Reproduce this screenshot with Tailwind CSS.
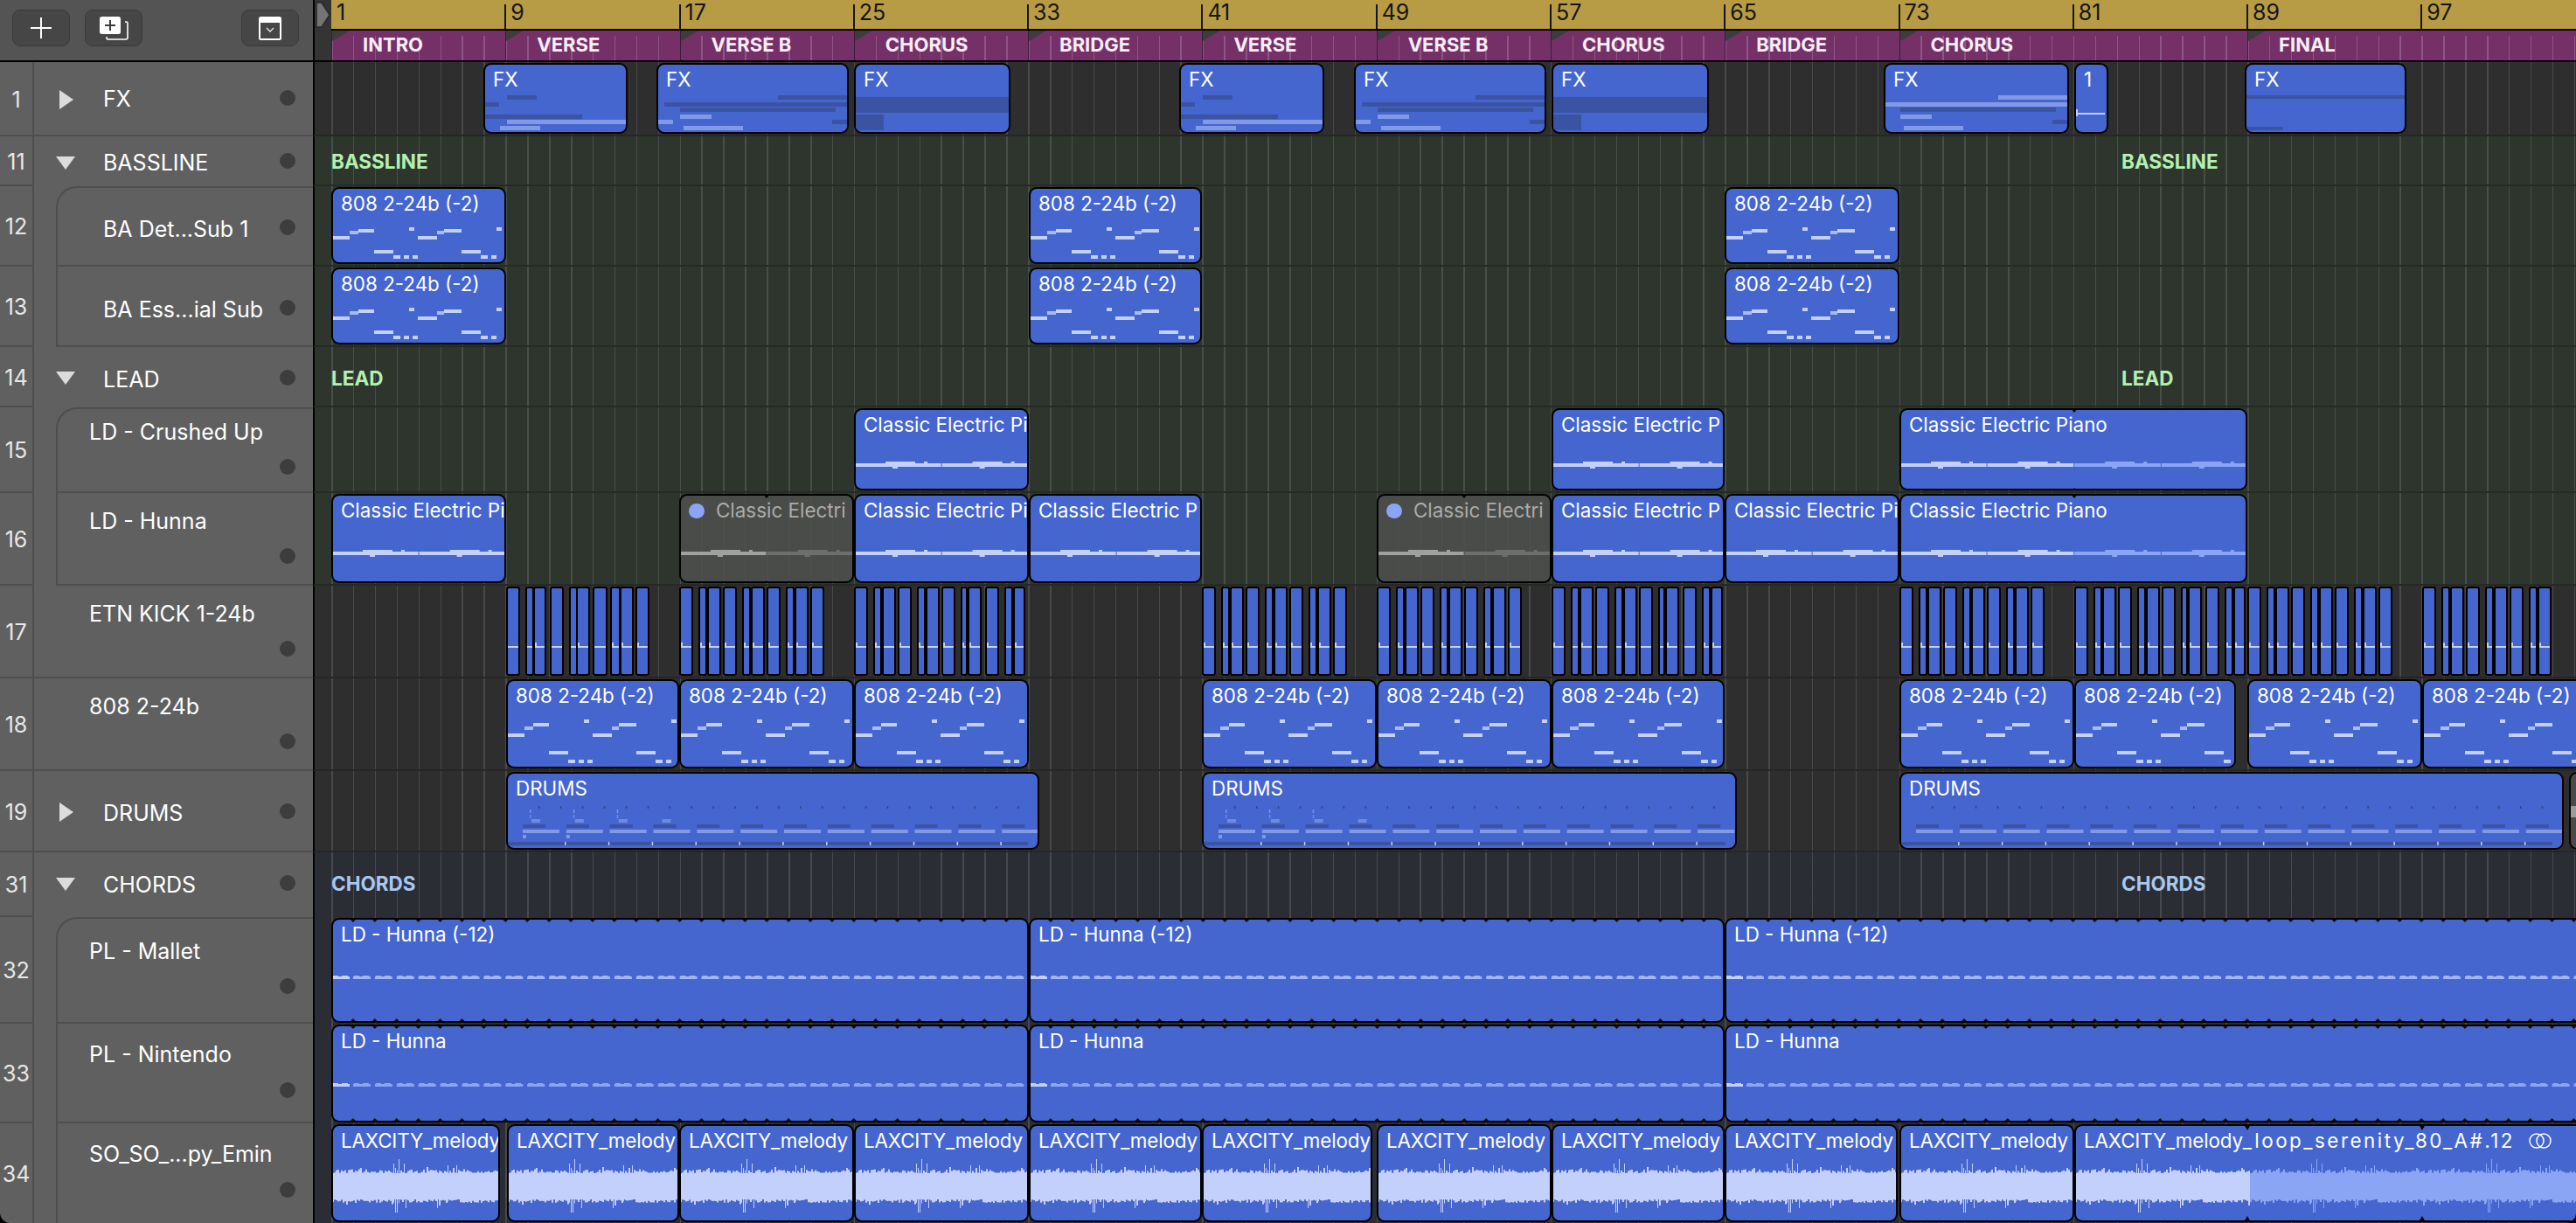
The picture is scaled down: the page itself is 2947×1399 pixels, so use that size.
<!DOCTYPE html>
<html lang="en">
<head>
<meta charset="utf-8">
<title>Arrangement</title>
<script src="https://cdn.jsdelivr.net/npm/@tailwindcss/browser@4"></script>
</head>
<body class="bg-black">
<div class="flex h-[1399px] w-[2947px] flex-col overflow-hidden rounded-b-[12px] bg-black font-['Inter','Liberation_Sans',sans-serif] text-white antialiased">

  <!-- Header -->
  <div class="flex h-[71px] shrink-0 border-b-2 border-black">
    <div class="flex w-[358px] shrink-0 items-start gap-[17px] bg-[#545454] pl-[14px] pr-[16px] pt-[11px]">
      <button class="flex h-[42px] w-[66px] items-center justify-center rounded-[9px] border border-[#3a3a3a] bg-[#464646]">
        <svg width="26" height="26" viewBox="0 0 26 26"><path d="M13 1v24M1 13h24" stroke="#fff" stroke-width="2"/></svg>
      </button>
      <button class="flex h-[42px] w-[66px] items-center justify-center rounded-[9px] border border-[#3a3a3a] bg-[#464646]">
        <svg width="34" height="28" viewBox="0 0 34 28"><path d="M30 7h1.5a1.5 1.5 0 0 1 1.5 1.5V25a2 2 0 0 1-2 2H10.5A1.5 1.5 0 0 1 9 25.500V24" fill="none" stroke="#fff" stroke-width="1.600"/><rect x="1" y="1" width="24" height="20" rx="2.500" fill="#fff"/><path d="M13 5v12M7 11h12" stroke="#3c3c3c" stroke-width="2"/></svg>
      </button>
      <button class="ml-auto flex h-[42px] w-[66px] items-center justify-center rounded-[9px] border border-[#3a3a3a] bg-[#464646]">
        <svg width="26" height="27" viewBox="0 0 26 27"><rect x="1" y="1" width="24" height="25" rx="1.500" fill="none" stroke="#fff" stroke-width="2"/><rect x="1" y="1" width="24" height="6" fill="#fff"/><path d="M9 13l4 4 4-4" fill="none" stroke="#e8e8e8" stroke-width="1.300"/></svg>
      </button>
    </div>
    <div class="relative flex-1 border-l-2 border-black bg-[#343434]">
      <svg class="absolute left-[1px] top-[2px]" width="18" height="30" viewBox="0 0 18 30"><path d="M1 1h6l9 14-9 14H1z" fill="#747474" stroke="#2a2a2a" stroke-width="1.500"/></svg>
      <div class="absolute bottom-0 left-[19px] top-[35px] border-l border-dotted border-[#a8a8a8]"></div>
      <div id="ruler" class="absolute left-[19px] right-0 top-0 h-[33px] bg-[#b89c45]"></div>
      <div class="absolute left-[19px] right-0 top-[33px] h-[2px] bg-black"></div>
      <div id="markers" class="absolute bottom-0 left-[19px] right-0 top-[35px] overflow-hidden bg-[#763068]">
        <div class="absolute inset-x-0 bottom-0 top-[6px] bg-[image:repeating-linear-gradient(90deg,#8f5584_0,#8f5584_1.5px,transparent_1.5px,transparent_24.91px)]"></div>
      </div>
    </div>
  </div>

  <!-- Track 1 -->
  <div class="flex h-[85px] shrink-0">
    <div class="flex w-[358px] shrink-0 bg-[#606060]">
      <div class="flex w-[39px] items-center justify-center border-b-2 border-r-2 border-[#4e4e4e] pt-[4px] text-[25px] text-[#e8e8e8]">1</div>
      <div class="flex flex-1 items-start border-b-2 border-[#4e4e4e] pl-[29px] pr-[20px]">
        <svg class="mt-[32px] w-[16px] shrink-0" height="22" viewBox="0 0 16 22"><path d="M0 0l16 11L0 22z" fill="#dcdcdc"/></svg>
        <span class="ml-[34px] mt-[28px] flex-1 text-[25px] leading-[28px]">FX</span>
        <span class="mt-[32px] size-[18px] rounded-full bg-[#3d3d3d]"></span>
      </div>
    </div>
    <div data-lane class="relative flex-1 overflow-hidden border-b-2 border-l-2 border-b-[#262626] border-l-black bg-[#2e2e2e]"></div>
  </div>

  <!-- Track 11 -->
  <div class="flex h-[57px] shrink-0">
    <div class="flex w-[358px] shrink-0 bg-[#606060]">
      <div class="flex w-[39px] items-center justify-center border-b-2 border-r-2 border-[#4e4e4e] pt-[4px] text-[25px] text-[#e8e8e8]">11</div>
      <div class="flex flex-1 items-start pl-[25px] pr-[20px]">
        <svg class="mt-[23px] w-[22px] shrink-0" height="15" viewBox="0 0 22 15"><path d="M0 0h22L11 15z" fill="#dcdcdc"/></svg>
        <span class="ml-[32px] mt-[16px] flex-1 text-[25px] leading-[28px]">BASSLINE</span>
        <span class="mt-[19px] size-[18px] rounded-full bg-[#3d3d3d]"></span>
      </div>
    </div>
    <div data-lane class="relative flex-1 overflow-hidden border-b-2 border-l-2 border-b-[#252a25] border-l-black bg-[#2d352d]"></div>
  </div>

  <!-- Track 12 -->
  <div class="flex h-[92px] shrink-0">
    <div class="flex w-[358px] shrink-0 bg-[#606060]">
      <div class="flex w-[39px] items-center justify-center border-b-2 border-r-2 border-[#4e4e4e] pt-[4px] text-[25px] text-[#e8e8e8]">12</div>
      <div class="ml-[25px] flex flex-1 items-start rounded-tl-[24px] border-b-2 border-l-2 border-t-2 border-[#4e4e4e] pl-[52px] pr-[20px]">
        <span class="mt-[33px] flex-1 whitespace-nowrap text-[25px] leading-[28px]">BA Det...Sub 1</span>
        <span class="mt-[36px] size-[18px] rounded-full bg-[#3d3d3d]"></span>
      </div>
    </div>
    <div data-lane class="relative flex-1 overflow-hidden border-b-2 border-l-2 border-b-[#252a25] border-l-black bg-[#2d352d]"></div>
  </div>

  <!-- Track 13 -->
  <div class="flex h-[92px] shrink-0">
    <div class="flex w-[358px] shrink-0 bg-[#606060]">
      <div class="flex w-[39px] items-center justify-center border-b-2 border-r-2 border-[#4e4e4e] pt-[4px] text-[25px] text-[#e8e8e8]">13</div>
      <div class="ml-[25px] flex flex-1 items-start border-b-2 border-l-2 border-[#4e4e4e] pl-[52px] pr-[20px]">
        <span class="mt-[35px] flex-1 whitespace-nowrap text-[25px] leading-[28px]">BA Ess...ial Sub</span>
        <span class="mt-[38px] size-[18px] rounded-full bg-[#3d3d3d]"></span>
      </div>
    </div>
    <div data-lane class="relative flex-1 overflow-hidden border-b-2 border-l-2 border-b-[#252a25] border-l-black bg-[#2d352d]"></div>
  </div>

  <!-- Track 14 -->
  <div class="flex h-[69px] shrink-0">
    <div class="flex w-[358px] shrink-0 bg-[#606060]">
      <div class="flex w-[39px] items-center justify-center border-b-2 border-r-2 border-[#4e4e4e] pt-[4px] text-[25px] text-[#e8e8e8]">14</div>
      <div class="flex flex-1 items-start pl-[25px] pr-[20px]">
        <svg class="mt-[28px] w-[22px] shrink-0" height="15" viewBox="0 0 22 15"><path d="M0 0h22L11 15z" fill="#dcdcdc"/></svg>
        <span class="ml-[32px] mt-[23px] flex-1 text-[25px] leading-[28px]">LEAD</span>
        <span class="mt-[26px] size-[18px] rounded-full bg-[#3d3d3d]"></span>
      </div>
    </div>
    <div data-lane class="relative flex-1 overflow-hidden border-b-2 border-l-2 border-b-[#252a25] border-l-black bg-[#2d352d]"></div>
  </div>

  <!-- Track 15 -->
  <div class="flex h-[98px] shrink-0">
    <div class="flex w-[358px] shrink-0 bg-[#606060]">
      <div class="flex w-[39px] items-center justify-center border-b-2 border-r-2 border-[#4e4e4e] pt-[4px] text-[25px] text-[#e8e8e8]">15</div>
      <div class="ml-[25px] flex flex-1 items-start rounded-tl-[24px] border-b-2 border-l-2 border-t-2 border-[#4e4e4e] pl-[36px] pr-[20px]">
        <span class="mt-[12px] flex-1 whitespace-nowrap text-[25px] leading-[28px]">LD - Crushed Up</span>
        <span class="mt-[57px] size-[18px] rounded-full bg-[#3d3d3d]"></span>
      </div>
    </div>
    <div data-lane class="relative flex-1 overflow-hidden border-b-2 border-l-2 border-b-[#252a25] border-l-black bg-[#2d352d]"></div>
  </div>

  <!-- Track 16 -->
  <div class="flex h-[106px] shrink-0">
    <div class="flex w-[358px] shrink-0 bg-[#606060]">
      <div class="flex w-[39px] items-center justify-center border-b-2 border-r-2 border-[#4e4e4e] pt-[4px] text-[25px] text-[#e8e8e8]">16</div>
      <div class="ml-[25px] flex flex-1 items-start border-b-2 border-l-2 border-[#4e4e4e] pl-[36px] pr-[20px]">
        <span class="mt-[18px] flex-1 whitespace-nowrap text-[25px] leading-[28px]">LD - Hunna</span>
        <span class="mt-[63px] size-[18px] rounded-full bg-[#3d3d3d]"></span>
      </div>
    </div>
    <div data-lane class="relative flex-1 overflow-hidden border-b-2 border-l-2 border-b-[#252a25] border-l-black bg-[#2d352d]"></div>
  </div>

  <!-- Track 17 -->
  <div class="flex h-[106px] shrink-0">
    <div class="flex w-[358px] shrink-0 bg-[#606060]">
      <div class="flex w-[39px] items-center justify-center border-b-2 border-r-2 border-[#4e4e4e] pt-[4px] text-[25px] text-[#e8e8e8]">17</div>
      <div class="flex flex-1 items-start border-b-2 border-[#4e4e4e] pl-[63px] pr-[20px]">
        <span class="mt-[18px] flex-1 whitespace-nowrap text-[25px] leading-[28px]">ETN KICK 1-24b</span>
        <span class="mt-[63px] size-[18px] rounded-full bg-[#3d3d3d]"></span>
      </div>
    </div>
    <div data-lane class="relative flex-1 overflow-hidden border-b-2 border-l-2 border-b-[#262626] border-l-black bg-[#2e2e2e]"></div>
  </div>

  <!-- Track 18 -->
  <div class="flex h-[106px] shrink-0">
    <div class="flex w-[358px] shrink-0 bg-[#606060]">
      <div class="flex w-[39px] items-center justify-center border-b-2 border-r-2 border-[#4e4e4e] pt-[4px] text-[25px] text-[#e8e8e8]">18</div>
      <div class="flex flex-1 items-start border-b-2 border-[#4e4e4e] pl-[63px] pr-[20px]">
        <span class="mt-[18px] flex-1 whitespace-nowrap text-[25px] leading-[28px]">808 2-24b</span>
        <span class="mt-[63px] size-[18px] rounded-full bg-[#3d3d3d]"></span>
      </div>
    </div>
    <div data-lane class="relative flex-1 overflow-hidden border-b-2 border-l-2 border-b-[#262626] border-l-black bg-[#2e2e2e]"></div>
  </div>

  <!-- Track 19 -->
  <div class="flex h-[93px] shrink-0">
    <div class="flex w-[358px] shrink-0 bg-[#606060]">
      <div class="flex w-[39px] items-center justify-center border-b-2 border-r-2 border-[#4e4e4e] pt-[4px] text-[25px] text-[#e8e8e8]">19</div>
      <div class="flex flex-1 items-start border-b-2 border-[#4e4e4e] pl-[29px] pr-[20px]">
        <svg class="mt-[36px] w-[16px] shrink-0" height="22" viewBox="0 0 16 22"><path d="M0 0l16 11L0 22z" fill="#dcdcdc"/></svg>
        <span class="ml-[34px] mt-[34px] flex-1 text-[25px] leading-[28px]">DRUMS</span>
        <span class="mt-[37px] size-[18px] rounded-full bg-[#3d3d3d]"></span>
      </div>
    </div>
    <div data-lane class="relative flex-1 overflow-hidden border-b-2 border-l-2 border-b-[#262626] border-l-black bg-[#2e2e2e]"></div>
  </div>

  <!-- Track 31 -->
  <div class="flex h-[74px] shrink-0">
    <div class="flex w-[358px] shrink-0 bg-[#606060]">
      <div class="flex w-[39px] items-center justify-center border-b-2 border-r-2 border-[#4e4e4e] pt-[4px] text-[25px] text-[#e8e8e8]">31</div>
      <div class="flex flex-1 items-start pl-[25px] pr-[20px]">
        <svg class="mt-[29px] w-[22px] shrink-0" height="15" viewBox="0 0 22 15"><path d="M0 0h22L11 15z" fill="#dcdcdc"/></svg>
        <span class="ml-[32px] mt-[23px] flex-1 text-[25px] leading-[28px]">CHORDS</span>
        <span class="mt-[26px] size-[18px] rounded-full bg-[#3d3d3d]"></span>
      </div>
    </div>
    <div data-lane class="relative flex-1 overflow-hidden border-l-2 border-l-black bg-[#2a2e34]"></div>
  </div>

  <!-- Track 32 -->
  <div class="flex h-[122px] shrink-0">
    <div class="flex w-[358px] shrink-0 bg-[#606060]">
      <div class="flex w-[39px] items-center justify-center border-b-2 border-r-2 border-[#4e4e4e] pt-[4px] text-[25px] text-[#e8e8e8]">32</div>
      <div class="ml-[25px] flex flex-1 items-start rounded-tl-[24px] border-b-2 border-l-2 border-t-2 border-[#4e4e4e] pl-[36px] pr-[20px]">
        <span class="mt-[23px] flex-1 whitespace-nowrap text-[25px] leading-[28px]">PL - Mallet</span>
        <span class="mt-[68px] size-[18px] rounded-full bg-[#3d3d3d]"></span>
      </div>
    </div>
    <div data-lane class="relative flex-1 overflow-hidden border-l-2 border-l-black bg-[#2a2e34]"></div>
  </div>

  <!-- Track 33 -->
  <div class="flex h-[114px] shrink-0">
    <div class="flex w-[358px] shrink-0 bg-[#606060]">
      <div class="flex w-[39px] items-center justify-center border-b-2 border-r-2 border-[#4e4e4e] pt-[4px] text-[25px] text-[#e8e8e8]">33</div>
      <div class="ml-[25px] flex flex-1 items-start border-b-2 border-l-2 border-[#4e4e4e] pl-[36px] pr-[20px]">
        <span class="mt-[21px] flex-1 whitespace-nowrap text-[25px] leading-[28px]">PL - Nintendo</span>
        <span class="mt-[67px] size-[18px] rounded-full bg-[#3d3d3d]"></span>
      </div>
    </div>
    <div data-lane class="relative flex-1 overflow-hidden border-l-2 border-l-black bg-[#2a2e34]"></div>
  </div>

  <!-- Track 34 -->
  <div class="flex h-[114px] shrink-0">
    <div class="flex w-[358px] shrink-0 bg-[#606060]">
      <div class="flex w-[39px] items-center justify-center border-r-2 border-[#4e4e4e] pt-[4px] text-[25px] text-[#e8e8e8]">34</div>
      <div class="ml-[25px] flex flex-1 items-start border-l-2 border-[#4e4e4e] pl-[36px] pr-[20px]">
        <span class="mt-[21px] flex-1 whitespace-nowrap text-[25px] leading-[28px]">SO_SO_...py_Emin</span>
        <span class="mt-[67px] size-[18px] rounded-full bg-[#3d3d3d]"></span>
      </div>
    </div>
    <div data-lane class="relative flex-1 overflow-hidden border-l-2 border-l-black bg-[#2a2e34]"></div>
  </div>
</div>

<script>
const LANE_X = 360, BAR = 24.91, ORIGIN = 379;
const tops = [71,156,213,305,397,466,564,670,776,882,975,1049,1171,1285];
const lanes = [...document.querySelectorAll('[data-lane]')];
const LIGHT = '#c3d0fb', MID = '#8299e6', DARK = '#3a53a3', LOOP = '#8ba5f5';
const bar = n => ORIGIN + BAR * (n - 1);

lanes.forEach(l => {
  const g = document.createElement('div');
  g.className = 'absolute inset-y-0 left-[19px] right-0 bg-[image:repeating-linear-gradient(90deg,rgba(255,255,255,0.13)_0,rgba(255,255,255,0.13)_1.5px,transparent_1.5px,transparent_24.91px)]';
  l.appendChild(g);
});

/* Ruler and arrangement markers */
const ruler = document.getElementById('ruler'), markers = document.getElementById('markers');
for (let n = 1; n <= 97; n += 8) {
  const t = document.createElement('div');
  t.className = n === 1
    ? 'absolute top-[5px] bottom-0 flex pl-[7px] text-[25px] leading-[18px] text-[#141414]'
    : 'absolute top-[5px] bottom-0 flex border-l-2 border-[#141414] pl-[5px] text-[25px] leading-[18px] text-[#141414]';
  t.style.left = (bar(n) - ORIGIN - 1) + 'px';
  t.textContent = n;
  ruler.appendChild(t);
}
[[1,'INTRO'],[9,'VERSE'],[17,'VERSE B'],[25,'CHORUS'],[33,'BRIDGE'],[41,'VERSE'],[49,'VERSE B'],[57,'CHORUS'],[65,'BRIDGE'],[73,'CHORUS'],[89,'FINAL']].forEach(([n, s]) => {
  const m = document.createElement('div');
  m.className = 'absolute inset-y-0 w-[120px] border-l border-[#3b1d36]';
  m.style.left = (bar(n) - ORIGIN) + 'px';
  m.innerHTML = '<svg class="absolute left-0 top-0" width="20" height="12"><path d="M0 0h20L0 12z" fill="#3d3d3d"/></svg><span class="absolute left-[35px] top-[3px] whitespace-nowrap text-[22px] font-bold leading-[26px] text-[#f7eef6]">' + s + '</span>';
  markers.appendChild(m);
});

/* Region factory */
function region(r, x1, x2, o = {}) {
  const d = document.createElement('div');
  const muted = o.muted;
  d.className = muted
    ? 'absolute top-[1px] bottom-[1px] overflow-hidden rounded-[9px] border-2 border-black bg-[#4e4f4c]/90'
    : (o.small
      ? 'absolute top-[1px] bottom-[1px] overflow-hidden rounded-[3px] border-2 border-black bg-[#4566cf]'
      : 'absolute top-[1px] bottom-[1px] overflow-hidden rounded-[9px] border-2 border-black bg-[#4566cf]');
  d.style.left = (x1 - LANE_X) + 'px';
  d.style.width = (x2 - x1) + 'px';
  const top = tops[r] + 1;
  let svg = '';
  (o.rects || []).forEach(([x, y, w, h, c]) => {
    svg += '<rect x="' + x + '" y="' + (y - top) + '" width="' + w + '" height="' + h + '" fill="' + c + '"/>';
  });
  svg += o.raw || '';
  let html = '<svg class="absolute -left-[2px] -top-[2px]" width="' + (x2 - x1) + '" height="140">' + svg + '</svg>';
  if (o.title) {
    const cls = o.wide ? 'tracking-[-0.15px] text-white' : (muted ? 'text-[#ababab]' : 'text-white');
    html += '<span class="absolute left-[9px] top-[4px] flex items-center whitespace-nowrap text-[22.400px] leading-[26px] ' + cls + '">' +
      (o.dot ? '<i class="mr-[13px] inline-block h-[17px] w-[18px] rounded-full bg-[#8ba5f5]"></i>' : '') + o.title + (o.rest || '') + (o.rings || '') + '</span>';
  }
  d.innerHTML = html;
  lanes[r].appendChild(d);
}

/* Section labels over the lanes */
function label(r, x, s, color, y) {
  const l = document.createElement('span');
  l.className = 'absolute whitespace-nowrap text-[22.500px] font-bold leading-[26px] ' + color;
  l.style.left = (x - LANE_X) + 'px';
  l.style.top = (y - tops[r] - 13) + 'px';
  l.textContent = s;
  lanes[r].appendChild(l);
}
label(1, 379, 'BASSLINE', 'text-[#b4f0b0]', 185); label(1, 2427, 'BASSLINE', 'text-[#b4f0b0]', 185);
label(4, 379, 'LEAD', 'text-[#b4f0b0]', 433); label(4, 2427, 'LEAD', 'text-[#b4f0b0]', 433);
label(10, 379, 'CHORDS', 'text-[#a9c8f0]', 1011); label(10, 2427, 'CHORDS', 'text-[#a9c8f0]', 1011);

/* Track 1: FX */
const fxA = [[27,109,34,5,DARK],[0,117,18,5,DARK],[0,131,113,5,DARK],[27,137,138,5,MID],[19,144,46,5,MID]];
const fxB = [[139,109,80,5,DARK],[9,117,210,5,DARK],[27,123,178,5,DARK],[27,131,36,5,MID],[1,137,18,5,MID],[201,137,18,5,DARK],[31,144,68,5,MID]];
const fxC = [[131,109,80,5,MID],[1,117,210,5,MID],[19,123,178,5,DARK],[19,131,36,5,MID],[193,137,18,5,DARK],[23,144,68,5,MID]];
const fxD = [[0,111,200,18,DARK],[0,131,34,18,DARK]];
region(0,553,718,{title:'FX',rects:fxA});
region(0,751,971,{title:'FX',rects:fxB});
region(0,977,1156,{title:'FX',rects:fxD});
region(0,1349,1515,{title:'FX',rects:fxA});
region(0,1549,1769,{title:'FX',rects:fxB});
region(0,1775,1955,{title:'FX',rects:fxD});
region(0,2155,2367,{title:'FX',rects:fxC});
region(0,2373,2412,{title:'1',rects:[[2,129,33,2,LIGHT],[2,125,2,8,LIGHT]]});
region(0,2568,2753,{title:'FX',rects:[[0,109,190,4,DARK],[2,145,42,4,DARK]]});

/* 808 pattern */
function bass(ys) {
  const [a,b,c,d,e,f] = ys;
  return [[1,d,20,4,LIGHT],[21,c,10,4,'#a9baf3'],[31,b,18,4,LIGHT],[89,a,6,4,LIGHT],[99,d,22,4,LIGHT],[121,c,8,4,'#a9baf3'],[129,b,20,4,LIGHT],[189,a,6,4,LIGHT],
          [49,e,22,4,LIGHT],[71,f,8,4,LIGHT],[83,f,6,4,LIGHT],[93,f,6,4,LIGHT],[149,e,22,4,LIGHT],[171,f,8,4,LIGHT],[183,f,6,4,LIGHT]];
}
const b808 = (r, y0) => bass(r === 8 ? [823,827,831,839,859,869] : [y0+44,y0+46,y0+48,y0+54,y0+70,y0+76]);
[[379,579],[1177,1375],[1973,2173]].forEach(([a,b]) => {
  region(2,a,b,{title:'808 2-24b (-2)',rects:b808(2,216)});
  region(3,a,b,{title:'808 2-24b (-2)',rects:b808(3,308)});
});
[[579,777],[777,977],[977,1177],[1375,1575],[1575,1775],[1775,1973],[2173,2373],[2373,2558],[2571,2771],[2771,3000]].forEach(([a,b]) => {
  region(8,a,b,{title:'808 2-24b (-2)',rects:b808(8)});
});

/* Electric piano lines */
function piano(w, y, c, c2, split) {
  const out = [];
  for (let s = 0; s < w; s += 99.6) {
    const col = (split && s >= split - 1) ? c2 : c;
    const end = Math.min(99.6, w - s);
    out.push([s + 1, y, end - 1, 4, col]);
    out.push([s + 36, y - 2, Math.min(34, end), 2, col]);
    out.push([s + 44, y + 4, 6, 2, col]);
    out.push([s + 80, y - 2, 4, 2, col]);
  }
  return out;
}
const notch = (x) => '<path d="M' + (x-4) + ' 0h8l-4 7zM' + (x-4) + ' 112h8l-4 -7z" fill="#000"/>';
const tips = (w, h) => { let s = ''; for (let x = BAR; x < w; x += BAR) s += '<path d="M' + (x-3) + ' 2h6l-3 3zM' + (x-3) + ' ' + (h-2) + 'h6l-3 -3z" fill="#111"/>'; return s; };

const ep = 'Classic Electric Pi', epShort = 'Classic Electric P', epFull = 'Classic Electric Piano';
region(5,977,1177,{title:ep,rects:piano(200,530,LIGHT)});
region(5,1775,1973,{title:epShort,rects:piano(198,530,LIGHT)});
region(5,2173,2571,{title:epFull,rects:piano(398,530,LIGHT,LOOP,200),raw:'<path d="M196 0h8l-4 5z" fill="#000"/><path d="M196 96h8l-4 -5z" fill="#000"/>'});
region(6,379,579,{title:ep,rects:piano(200,631,LIGHT)});
[[777,977],[1575,1775]].forEach(([a,b]) => {
  region(6,a,b,{muted:true,dot:true,title:'Classic Electri',rects:piano(200,631,'#a0a09e','#6e6f6c',100).filter(r => !(r[0] > 84 && r[0] < 99)),raw:'<path d="M96 0h8l-4 5z" fill="#000"/><path d="M96 104h8l-4 -5z" fill="#000"/>'});
});
region(6,977,1177,{title:ep,rects:piano(200,631,LIGHT)});
region(6,1177,1375,{title:epShort,rects:piano(198,631,LIGHT)});
region(6,1775,1973,{title:epShort,rects:piano(198,631,LIGHT)});
region(6,1973,2173,{title:ep,rects:piano(200,631,LIGHT)});
region(6,2173,2571,{title:epFull,rects:piano(398,631,LIGHT,LOOP,200),raw:'<path d="M196 0h8l-4 5z" fill="#000"/><path d="M196 104h8l-4 -5z" fill="#000"/>'});

/* Track 17: kick slices */
const K10 = [[0,16],[22,32],[32,48],[50,66],[72,82],[82,98],[100,116],[122,132],[132,148],[150,166]];
const K12 = [[0,16],[22,32],[32,48],[50,66],[72,82],[82,98],[100,116],[122,130],[130,146],[150,166],[172,182],[182,196]];
function kick(x, list, pat) {
  list.forEach(([a,b], i) => {
    const L = pat[i] === 'L';
    const rects = [[2, 739, b - a - 4, 2, LIGHT]];
    if (L) rects.push([2, 735, 2, 5, LIGHT]);
    region(7, x + a, x + b, {small:true, rects});
  });
}
kick(579,[[0,16],[22,32],[31,46],[50,66],[72,82],[80,96],[99,116],[119,131],[130,146],[148,164]],'--L--L-LLL');
kick(777,K10,'LLLLLLLLLL');
kick(977,K12,'LL-LL-LLLL-L');
kick(1375,K10,'LLLLLLLLLL');
kick(1575,K10,'LL-LL-LL-L');
kick(1775,K12,'L-L--L--L-LL');
kick(2173,K10,'LL-LL-LL-L');
kick(2373,K12,'LLLL-L-LLLLL');
kick(2571,K10,'LLLLLLLLLL');
kick(2771,K10.slice(0,9),'LLLLL-LLL');

/* Track 19: drums */
function drums(x1, x2, n, accents) {
  const w = x2 - x1, r = [];
  r.push([1, 963, w - 14, 4, DARK]);
  for (let i = 0; i < n; i++) {
    const x = 19 + i * 49.84;
    r.push([x, 943, 26, 4, DARK], [x, 949, 42, 4, MID]);
    if (i < 2 && accents) r.push([x, 955, 4, 4, MID]);
    if (i < 4 && accents) r.push([x + 10, 937, 10, 4, '#6f8ae0']);
    if (i < 3 && accents) r.push([x + 8, 926, 1.500, 4, '#7d95e4'], [x + 8, 932, 1.500, 4, '#6f8ae0']);
    r.push([x + 18, 922, 1.500, 3, '#30478f'], [x + 43, 922, 1.500, 3, '#30478f']);
    r.push([x + 48, 963, 1.500, 4, LIGHT]);
  }
  return r;
}
region(9,579,1189,{title:'DRUMS',rects:drums(579,1189,12,true)});
region(9,1375,1987,{title:'DRUMS',rects:drums(1375,1987,12,true)});
region(9,2173,2933,{title:'DRUMS',rects:drums(2173,2933,15,false)});
region(9,2939,3000,{muted:true,rects:[[2,922,8,13,'#9a9a9a']]});

/* Tracks 32 and 33: long held notes */
function held(w, y, c) {
  const r = [];
  for (let i = 0; BAR * i < w; i++) {
    const x = BAR * i + (i === 0 ? 1 : 0), col = i === 0 ? LIGHT : c;
    r.push([x, y + 1, 20, 3, col], [x + 1, y, 6, 1, col], [x + 11, y, 7, 1, col]);
  }
  return r;
}
[[379,1177],[1177,1973],[1973,3100]].forEach(([a,b]) => {
  region(11,a,b,{title:'LD - Hunna (-12)',rects:held(b-a,1116,'#a2b5f3'),raw:tips(b-a,120)});
  region(12,a,b,{title:'LD - Hunna',rects:held(b-a,1239,LOOP),raw:tips(b-a,112)});
});

/* Track 34: audio */
let seed = 1234;
const rnd = () => { seed = (seed * 16807) % 2147483647; return seed / 2147483647; };
let wave = 'M0 -15h200v30h-200z';
for (let i = 0; i < 100; i++) {
  const x = i * 2;
  let up = 15 + rnd() * 4, dn = 15 + rnd() * 4;
  if (rnd() > 0.85) up += rnd() * 4;
  if (rnd() > 0.85) dn += rnd() * 4;
  if (i === 38) up = 31;
  if (i === 35 || i === 41) up = 26;
  if (i === 66 || i === 71) up = 24;
  if (i === 36 || i === 37) dn = 30;
  if (i === 60 || i === 42) dn = 25;
  const w = (up > 23 || dn > 23) ? 1 : 2;
  wave += 'M' + x + ' ' + (-up).toFixed(1) + 'h' + w + 'V' + dn.toFixed(1) + 'h' + (-w) + 'z';
}
const wavePath = (x, c) => '<path d="' + wave + '" transform="translate(' + x + ',71)" fill="' + c + '"/>';
[[379,572],[580,777],[777,977],[977,1177],[1177,1375],[1375,1570],[1575,1775],[1775,1973],[1973,2171],[2173,2373]].forEach(([a,b]) => {
  region(13,a,b,{wide:true,title:'LAXCITY_melody',raw:wavePath(1,LIGHT)});
});
region(13,2373,3100,{
  wide:true,
  title:'LAXCITY_melody',
  rest:'<span class="tracking-[2.500px]">_loop_serenity_80_A#.12</span>',
  rings:'<svg class="ml-[16px]" width="26" height="18" viewBox="0 0 26 18"><circle cx="9" cy="9" r="8" fill="none" stroke="#fff" stroke-width="1.500"/><circle cx="17" cy="9" r="8" fill="none" stroke="#fff" stroke-width="1.500"/></svg>',
  raw:wavePath(1,LIGHT)+wavePath(201,LOOP)+wavePath(401,LOOP)+notch(198)+notch(398)
});
</script>
</body>
</html>
